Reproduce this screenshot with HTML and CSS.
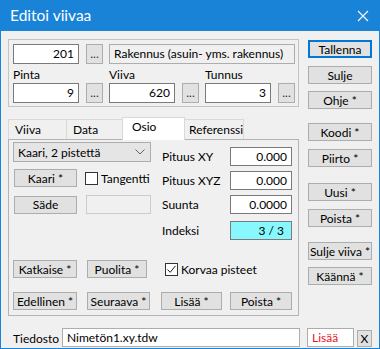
FILE: index.html
```html
<!DOCTYPE html>
<html lang="fi">
<head>
  <meta charset="UTF-8" />
  <title>Editoi viivaa</title>
  <link rel="stylesheet" href="styles.css">
</head>
<body>
<div class="window">
  <div class="titlebar">
    <span class="title">Editoi viivaa</span>
    <svg class="close" width="12" height="12" viewBox="0 0 12 12"><path d="M1 1 L11 11 M11 1 L1 11" stroke="#fff" stroke-width="1.1" fill="none"/></svg>
  </div>

  <div class="client">
    <div class="main">
      <div class="left">
        <div class="group">
          <div class="row">
            <div class="field num">201</div>
            <button class="btn dots">...</button>
            <div class="field ro name">Rakennus (asuin- yms. rakennus)</div>
          </div>
          <div class="cols">
            <div class="col">
              <div class="lbl">Pinta</div>
              <div class="row"><div class="field num">9</div><button class="btn dots">...</button></div>
            </div>
            <div class="col">
              <div class="lbl">Viiva</div>
              <div class="row"><div class="field num">620</div><button class="btn dots">...</button></div>
            </div>
            <div class="col">
              <div class="lbl">Tunnus</div>
              <div class="row"><div class="field num">3</div><button class="btn dots">...</button></div>
            </div>
          </div>
        </div>

        <div class="tabs">
          <div class="tab t-viiva">Viiva</div>
          <div class="tab t-data">Data</div>
          <div class="tab active t-osio">Osio</div>
          <div class="tab t-ref">Referenssi</div>
        </div>

        <div class="panel">
          <div class="ptop">
            <div class="pleft">
              <div class="select">
                <span>Kaari, 2 pistettä</span>
                <svg width="10" height="6" viewBox="0 0 10 6"><path d="M0.5 0.5 L5 5 L9.5 0.5" stroke="#606060" fill="none"/></svg>
              </div>
              <div class="line l-kaari">
                <button class="btn w63">Kaari *</button>
                <span class="check"></span>
                <span class="clbl">Tangentti</span>
              </div>
              <div class="line l-sade">
                <button class="btn w63">Säde</button>
                <div class="field off"></div>
              </div>
            </div>
            <div class="pright">
              <div class="vrow r1"><span>Pituus XY</span><div class="field val">0.000</div></div>
              <div class="vrow r2"><span>Pituus XYZ</span><div class="field val">0.000</div></div>
              <div class="vrow r3"><span>Suunta</span><div class="field val">0.0000</div></div>
              <div class="vrow r4"><span>Indeksi</span><div class="field val idx">3 / 3</div></div>
            </div>
          </div>
          <div class="brow b1">
            <button class="btn b-katk">Katkaise *</button>
            <button class="btn b-puol">Puolita *</button>
            <span class="check on">
              <svg width="11" height="11" viewBox="0 0 11 11"><path d="M1.5 5.5 L4.2 8.3 L9.5 1.8" stroke="#222" stroke-width="1" fill="none"/></svg>
            </span>
            <span class="clbl">Korvaa pisteet</span>
          </div>
          <div class="brow b2">
            <button class="btn b-ed">Edellinen *</button>
            <button class="btn b-seu">Seuraava *</button>
            <button class="btn b-lis">Lisää *</button>
            <button class="btn b-poi">Poista *</button>
          </div>
        </div>
      </div>

      <div class="side">
        <button class="btn default s1">Tallenna</button>
        <button class="btn s2">Sulje</button>
        <button class="btn s3">Ohje *</button>
        <button class="btn s4">Koodi *</button>
        <button class="btn s5">Piirto *</button>
        <button class="btn s6">Uusi *</button>
        <button class="btn s7">Poista *</button>
        <button class="btn s8">Sulje viiva *</button>
        <button class="btn s9">Käännä *</button>
      </div>
    </div>

    <div class="filerow">
      <span class="flbl">Tiedosto</span>
      <div class="field file">Nimetön1.xy.tdw</div>
      <div class="field add">Lisää</div>
      <button class="btn xbtn">X</button>
    </div>
  </div>
</div>
</body>
</html>
```

FILE: styles.css
```css
* {
  box-sizing: border-box;
}
body {
  margin: 0;
  font-family: Lato, "Noto Sans", sans-serif;
  font-size: 12px;
  color: #000;
  background: #fff;
}
.window {
  width: 380px;
  height: 349px;
  border: 1px solid #1883d7;
  border-top: none;
  background: #f0f0f0;
  display: flex;
  flex-direction: column;
}
.titlebar {
  height: 31px;
  background: #1883d7;
  color: #fff;
  display: flex;
  align-items: center;
  justify-content: space-between;
  padding: 0 9px 0 9px;
}
.title {
  font-size: 15.5px;
  margin-top: -1px;
}
.close {
  margin-right: 1px;
}
.client {
  padding: 8px 7px 0 7px;
}
.main {
  display: flex;
}
.left {
  width: 291px;
}
.side {
  width: 64px;
  margin-left: 9px;
  display: flex;
  flex-direction: column;
}

/* basic controls */
.btn {
  font: inherit;
  color: #000;
  background: #e1e1e1;
  border: 1px solid #adadad;
  height: 18px;
  padding: 0;
  line-height: 15px;
  text-align: center;
  white-space: nowrap;
}
.btn.default {
  border: 2px solid #0078d7;
  line-height: 13px;
}
.field {
  height: 20px;
  background: #fff;
  border: 1px solid #7a7a7a;
  line-height: 18px;
  padding: 0 4px;
  white-space: nowrap;
  overflow: hidden;
}
.field.num {
  width: 66px;
  text-align: right;
}
.field.ro {
  background: #f0f0f0;
  border-color: #adadad;
}
.dots {
  width: 17px;
  height: 20px;
  margin-left: 7px;
  color: #333;
  line-height: 14px;
}
.row {
  display: flex;
}

/* top group */
.group {
  height: 68px;
  border: 1px solid #c4c4c4;
  padding: 4px 3px 0 4px;
}
.name {
  flex: 1;
  margin-left: 6px;
  padding-left: 4px;
}
.cols {
  display: grid;
  grid-template-columns: 96px 96px 90px;
}
.lbl {
  height: 19px;
  line-height: 16px;
  padding-top: 3px;
}

/* tabs */
.tabs {
  margin-top: 10px;
  height: 22px;
  display: flex;
  align-items: flex-end;
  position: relative;
  z-index: 1;
}
.tab {
  height: 20px;
  line-height: 19px;
  padding-left: 6px;
  border: 1px solid #d9d9d9;
  border-bottom: none;
  margin-right: -1px;
}
.t-viiva { width: 59px; }
.t-data { width: 57px; }
.t-ref { width: 60px; padding-left: 4px; }
.tab.active {
  width: 63px;
  height: 23px;
  margin-bottom: -1px;
  background: #fff;
  padding-left: 9px;
  line-height: 18px;
  z-index: 2;
  border-color: #d9d9d9;
}
.panel {
  height: 177px;
  border: 1px solid #b4b4b4;
  padding: 0 6px 0 4px;
}
.ptop {
  display: flex;
}
.pleft {
  width: 142px;
}
.select {
  margin-top: 2px;
  width: 138px;
  height: 20px;
  background: #e5e5e5;
  border: 1px solid #adadad;
  display: flex;
  align-items: center;
  justify-content: space-between;
  padding: 0 5px 0 4px;
}
.line {
  display: flex;
  align-items: center;
}
.l-kaari {
  margin-top: 7px;
}
.l-sade {
  margin-top: 8px;
}
.w63 {
  width: 63px;
  margin-left: 1px;
}
.check {
  width: 13px;
  height: 13px;
  border: 1px solid #333;
  background: #fff;
  margin-left: 8px;
  display: inline-flex;
  align-items: center;
  justify-content: center;
}
.clbl {
  margin-left: 3px;
}
.field.off {
  width: 65px;
  height: 19px;
  margin-left: 9px;
  background: #f0f0f0;
  border-color: #cccccc;
}
.pright {
  flex: 1;
  margin-left: 7px;
}
.vrow {
  display: flex;
  align-items: center;
  justify-content: space-between;
  height: 19px;
}
.r1 { margin-top: 7px; }
.r2 { margin-top: 5px; }
.r3 { margin-top: 5px; }
.r4 { margin-top: 7px; }
.field.val {
  width: 62px;
  height: 19px;
  line-height: 17px;
  text-align: right;
  border-color: #7a7a7a;
}
.field.idx {
  background: #88f8ff;
  padding-right: 7px;
}
.brow {
  display: flex;
  align-items: center;
}
.b1 {
  margin-top: 20px;
}
.b2 {
  margin-top: 14px;
}
.b-katk { width: 64px; }
.b-puol { width: 60px; margin-left: 10px; }
.b1 .check { margin-left: 18px; }
.b-ed { width: 64px; }
.b-seu { width: 63px; margin-left: 10px; }
.b-lis { width: 61px; margin-left: 11px; }
.b-poi { width: 62px; margin-left: 8px; }

/* right button column */
.s1 { margin-top: 1px; }
.s2 { margin-top: 8px; }
.s3 { margin-top: 7px; }
.s4 { margin-top: 14px; }
.s5 { margin-top: 8px; }
.s6 { margin-top: 16px; }
.s7 { margin-top: 8px; }
.s8 { margin-top: 15px; }
.s9 { margin-top: 7px; }

/* file row */
.filerow {
  margin-top: 12px;
  display: flex;
  align-items: center;
}
.flbl {
  width: 54px;
  padding-left: 5px;
  margin-top: 2px;
}
.field.file {
  width: 238px;
  height: 19px;
  line-height: 17px;
  border-color: #adadad;
}
.field.add {
  width: 47px;
  height: 19px;
  line-height: 17px;
  margin-left: 7px;
  color: #e81123;
  border-color: #adadad;
}
.xbtn {
  width: 15px;
  height: 17px;
  margin-left: 3px;
  margin-top: 2px;
}
```
